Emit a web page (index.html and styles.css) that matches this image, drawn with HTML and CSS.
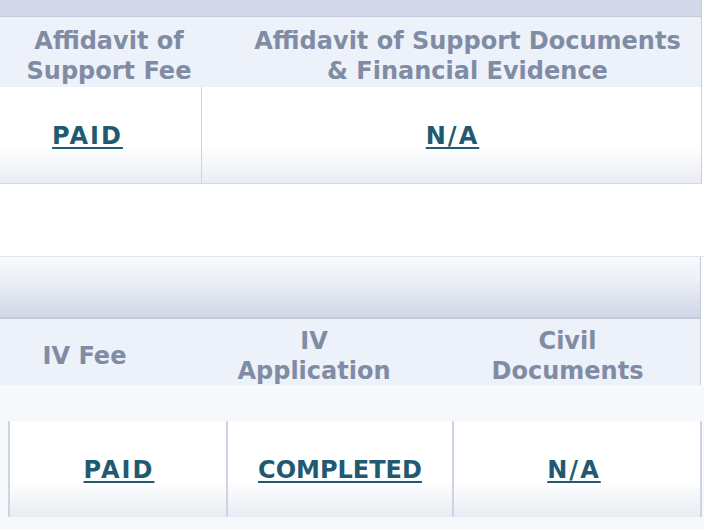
FILE: index.html
```html
<!DOCTYPE html>
<html>
<head>
<meta charset="utf-8">
<link rel="stylesheet" href="styles.css">
</head>
<body>
<div class="page">
  <section class="t1">
    <div class="bar1"></div>
    <div class="hrow1">
      <div class="h h1a">Affidavit of<br>Support Fee</div>
      <div class="h h1b">Affidavit of Support Documents<br>&amp; Financial Evidence</div>
    </div>
    <div class="drow1">
      <div class="d d1a"><a class="wide" href="#">PAID</a></div>
      <div class="d d1b"><a class="wide" href="#">N/A</a></div>
    </div>
  </section>
  <div class="gap"></div>
  <section class="t2">
    <div class="bar2"></div>
    <div class="hrow2">
      <div class="h h2a">IV Fee</div>
      <div class="h h2b">IV<br>Application</div>
      <div class="h h2c">Civil<br>Documents</div>
    </div>
    <div class="body2">
      <div class="drow2">
        <div class="d d2a"><a class="wide" href="#">PAID</a></div>
        <div class="d d2b"><a href="#">COMPLETED</a></div>
        <div class="d d2c"><a class="wide" href="#">N/A</a></div>
      </div>
    </div>
  </section>
</div>
</body>
</html>
```

FILE: styles.css
```css
html, body {
  margin: 0;
  padding: 0;
  background: #ffffff;
}
body {
  width: 704px;
  height: 529px;
  overflow: hidden;
  font-family: "DejaVu Sans", Verdana, sans-serif;
}
.page {
  width: 704px;
}
.h {
  font-weight: bold;
  font-size: 24px;
  line-height: 30px;
  color: #7f8ca3;
  text-align: center;
  display: flex;
  align-items: center;
  justify-content: center;
  box-sizing: border-box;
}
.d {
  display: flex;
  align-items: center;
  justify-content: center;
  box-sizing: border-box;
  padding-top: 2px;
  background: linear-gradient(to bottom, #ffffff 0%, #ffffff 62%, #e9ecf4 100%);
}
.d a {
  font-weight: bold;
  font-size: 24px;
  line-height: 30px;
  color: #1f5a72;
  text-decoration: underline;
  text-decoration-thickness: 2px;
  text-underline-offset: 3px;
}
.d a.wide {
  letter-spacing: 2px;
  margin-right: -2px;
}

/* table 1 */
.t1 {
  width: 702px;
  border-right: 1px solid #c9cfdf;
  box-sizing: border-box;
}
.bar1 {
  height: 16px;
  background: #d3d8e8;
  border-bottom: 1px solid #c3c9db;
}
.hrow1 {
  display: flex;
  height: 70px;
  background: #edf1fa;
  padding-top: 7px;
  box-sizing: border-box;
}
.h1a {
  width: 202px;
  padding-left: 16px;
}
.h1b {
  flex: 1;
  padding-left: 32px;
}
.drow1 {
  display: flex;
  height: 97px;
  border-bottom: 1px solid #d6dae6;
  box-sizing: border-box;
}
.d1a {
  width: 202px;
  padding-right: 28px;
  border-right: 1px solid #cfd4e3;
}
.d1b {
  flex: 1;
}

.gap {
  height: 72px;
}

/* table 2 */
.t2 {
  border-top: 1px solid #e3e6ef;
}
.bar2 {
  width: 701px;
  height: 62px;
  box-sizing: border-box;
  border-right: 1px solid #c4cadd;
  border-bottom: 2px solid #c3c9db;
  background: linear-gradient(to bottom, #f9fafc 0%, #eceff6 40%, #d0d6e7 100%);
}
.hrow2 {
  display: flex;
  width: 701px;
  height: 66px;
  box-sizing: border-box;
  border-right: 1px solid #c9cfdf;
  background: #edf1fa;
  padding-top: 7px;
}
.h2a {
  width: 193px;
  padding-right: 24px;
}
.h2b {
  width: 242px;
}
.h2c {
  flex: 1;
}
.body2 {
  background: #f7f8fb;
  padding: 36px 0 20px 8px;
}
.drow2 {
  display: flex;
  width: 694px;
  height: 96px;
}
.d2a, .d2b, .d2c {
  border-left: 2px solid #cfd4e3;
}
.d2a {
  width: 218px;
}
.d2b {
  width: 226px;
}
.d2c {
  width: 250px;
  border-right: 2px solid #cfd4e3;
  padding-right: 8px;
}
```
